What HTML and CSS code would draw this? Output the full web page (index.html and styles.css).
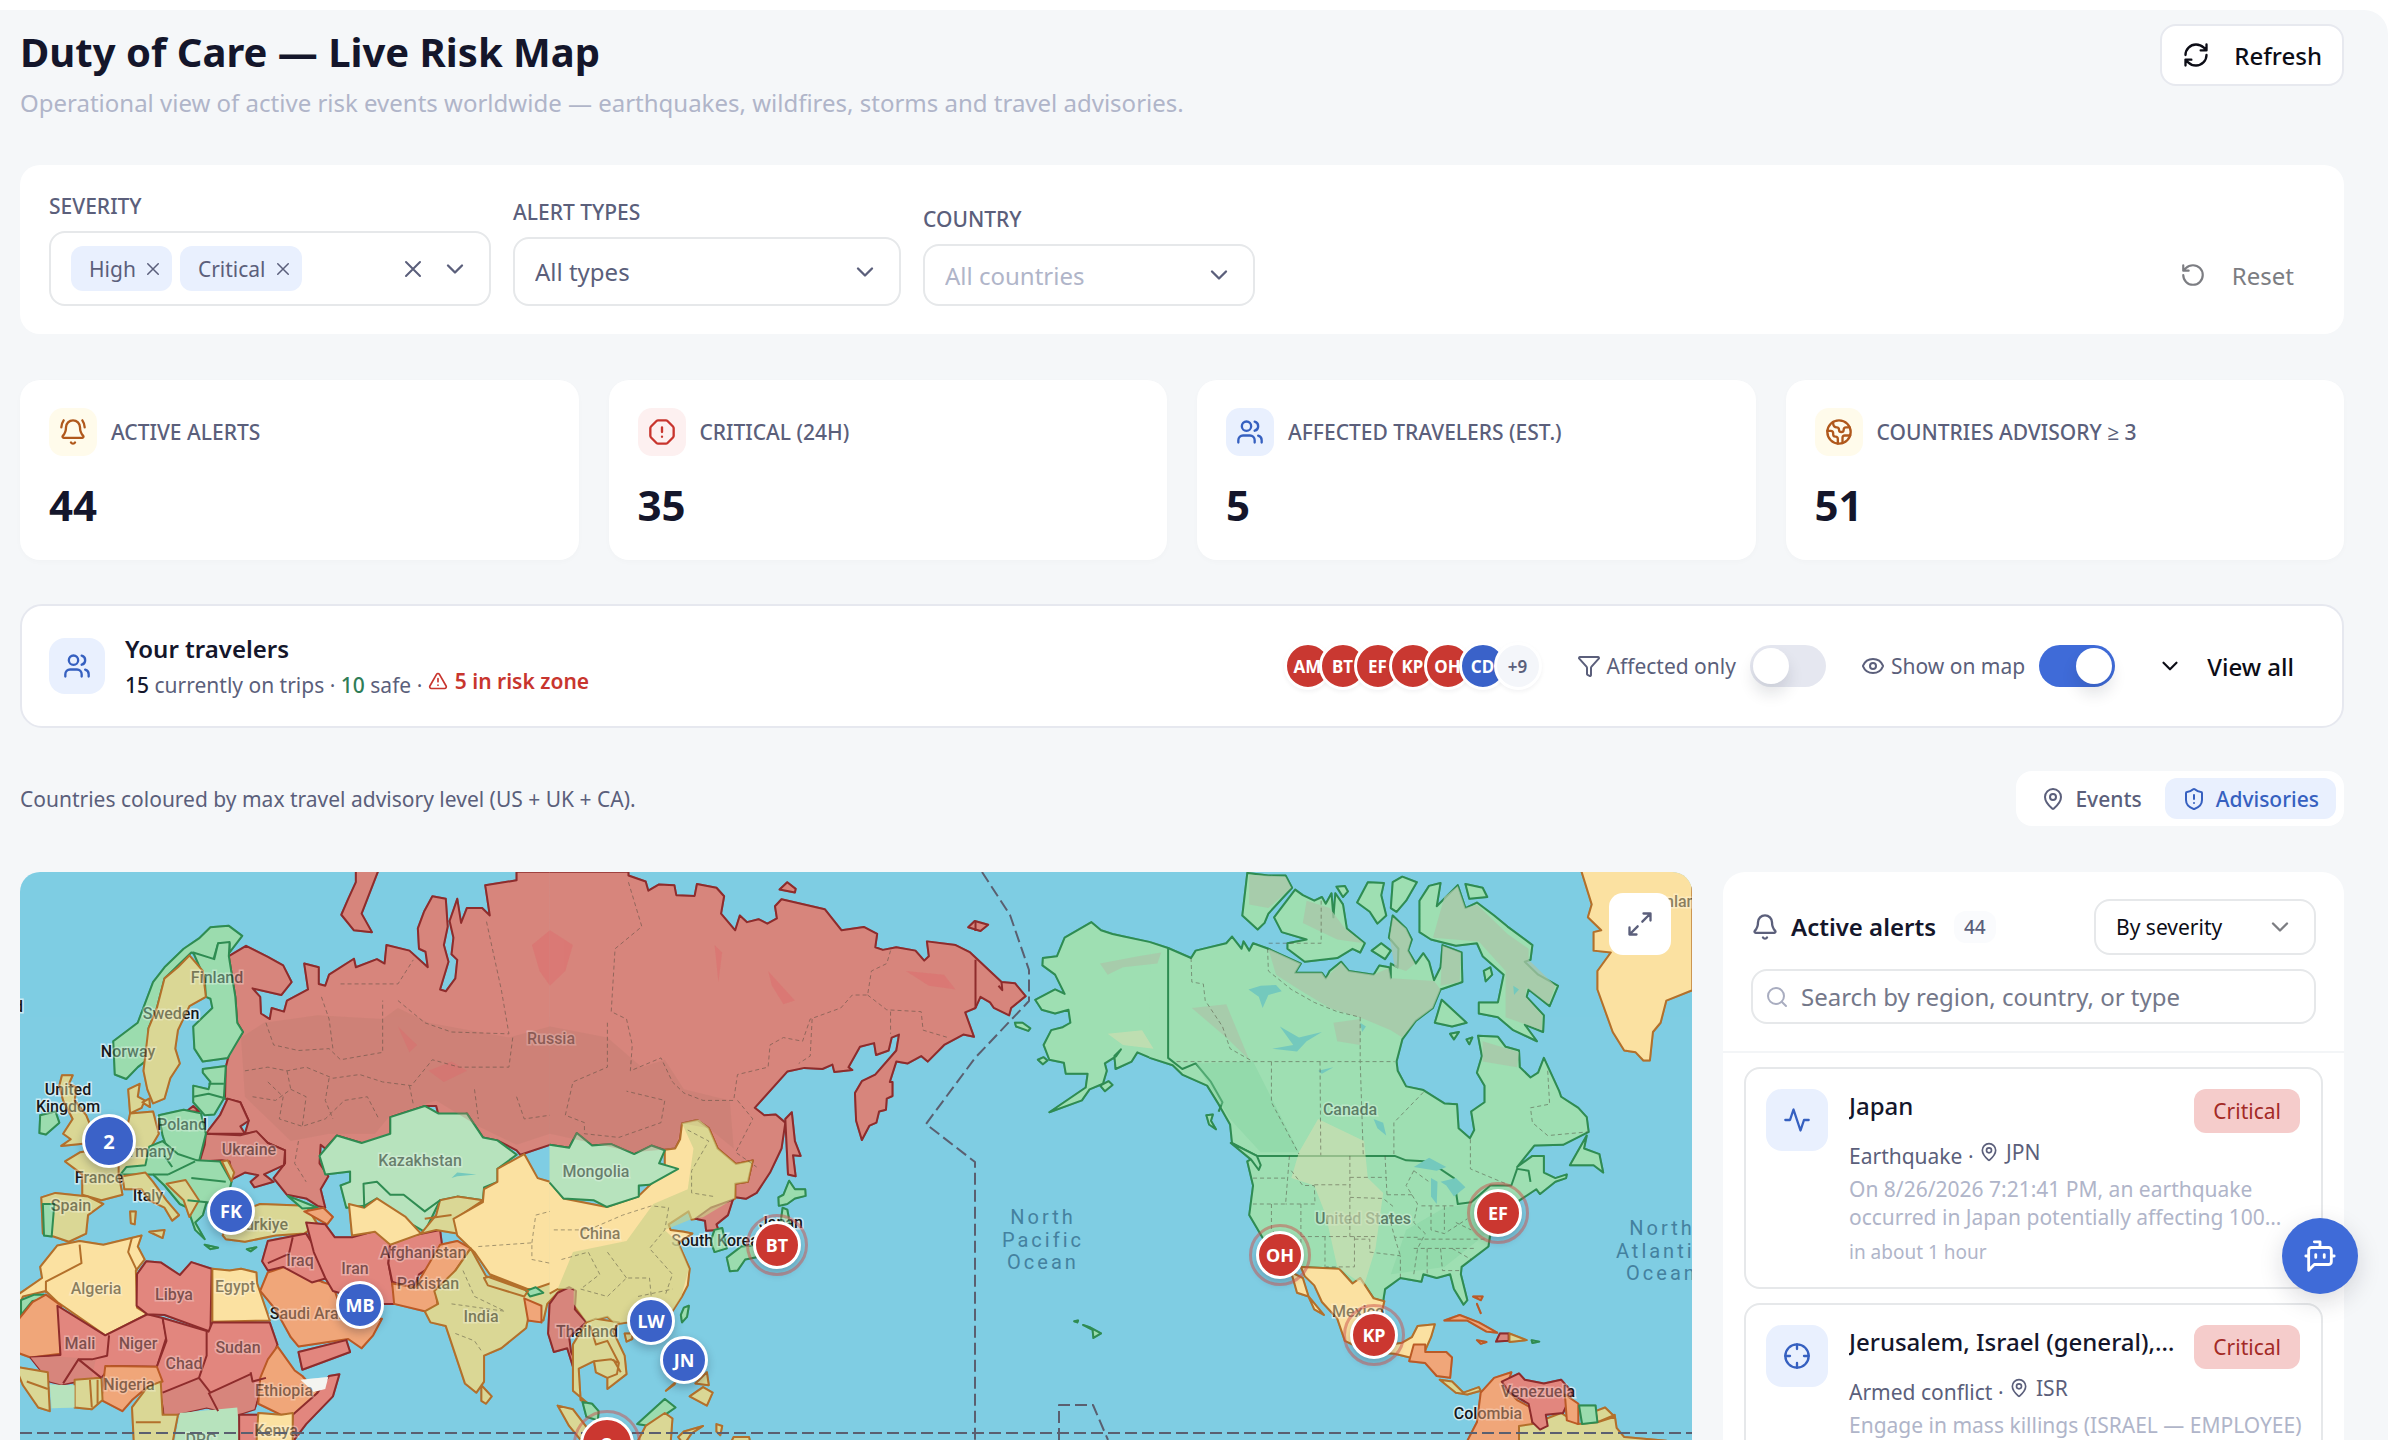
FILE: index.html
```html
<!DOCTYPE html>
<html lang="en">
<head>
<meta charset="utf-8">
<meta name="viewport" content="width=device-width, initial-scale=1">
<title>Duty of Care — Live Risk Map</title>
<link rel="stylesheet" href="styles.css">
</head>
<body>
<svg class="sprite" aria-hidden="true">
  <symbol id="i-chevron" viewBox="0 0 24 24"><path d="m6 9 6 6 6-6"/></symbol>
  <symbol id="i-x" viewBox="0 0 24 24"><path d="M19 5 5 19M5 5l14 14"/></symbol>
  <symbol id="i-refresh" viewBox="0 0 24 24"><path d="M3 12a9 9 0 0 1 9-9 9.75 9.75 0 0 1 6.74 2.74L21 8M21 3v5h-5M21 12a9 9 0 0 1-9 9 9.75 9.75 0 0 1-6.74-2.74L3 16M8 16H3v5"/></symbol>
  <symbol id="i-reset" viewBox="0 0 24 24"><path d="M3 12a9 9 0 1 0 9-9 9.75 9.75 0 0 0-6.74 2.74L3 8M3 3v5h5"/></symbol>
  <symbol id="i-bell" viewBox="0 0 24 24"><path d="M10.27 21a2 2 0 0 0 3.46 0M3.26 15.33A1 1 0 0 0 4 17h16a1 1 0 0 0 .74-1.67C19.41 13.96 18 12.5 18 8A6 6 0 0 0 6 8c0 4.5-1.41 5.96-2.74 7.33"/></symbol>
  <symbol id="i-bell-ring" viewBox="0 0 24 24"><path d="M10.27 21a2 2 0 0 0 3.46 0M22 8c0-2.3-.8-4.3-2-6M3.26 15.33A1 1 0 0 0 4 17h16a1 1 0 0 0 .74-1.67C19.41 13.96 18 12.5 18 8A6 6 0 0 0 6 8c0 4.5-1.41 5.96-2.74 7.33M4 2C2.800 3.700 2 5.700 2 8"/></symbol>
  <symbol id="i-octagon" viewBox="0 0 24 24"><path d="M12 16h.01M12 8v4M15.31 2a2 2 0 0 1 1.42.59l4.68 4.68A2 2 0 0 1 22 8.690v6.620a2 2 0 0 1-.59 1.420l-4.680 4.680a2 2 0 0 1-1.420.590H8.690a2 2 0 0 1-1.420-.590l-4.680-4.680A2 2 0 0 1 2 15.310V8.690a2 2 0 0 1 .590-1.420l4.680-4.680A2 2 0 0 1 8.690 2z"/></symbol>
  <symbol id="i-users" viewBox="0 0 24 24"><path d="M16 21v-2a4 4 0 0 0-4-4H6a4 4 0 0 0-4 4v2M22 21v-2a4 4 0 0 0-3-3.870M16 3.130a4 4 0 0 1 0 7.750"/><circle cx="9" cy="7" r="4"/></symbol>
  <symbol id="i-earth" viewBox="0 0 24 24"><path d="M21.540 15H17a2 2 0 0 0-2 2v4.540M7 3.340V5a3 3 0 0 0 3 3 2 2 0 0 1 2 2c0 1.100.900 2 2 2a2 2 0 0 0 2-2c0-1.100.900-2 2-2h3.170M11 21.950V18a2 2 0 0 0-2-2 2 2 0 0 1-2-2v-1a2 2 0 0 0-2-2H2.050"/><circle cx="12" cy="12" r="10"/></symbol>
  <symbol id="i-warn" viewBox="0 0 24 24"><path d="m21.730 18-8-14a2 2 0 0 0-3.480 0l-8 14A2 2 0 0 0 4 21h16a2 2 0 0 0 1.730-3M12 9v4M12 17h.01"/></symbol>
  <symbol id="i-filter" viewBox="0 0 24 24"><path d="M10 20a1 1 0 0 0 .550.900l2 1A1 1 0 0 0 14 21v-7a2 2 0 0 1 .520-1.340L21.740 4.670A1 1 0 0 0 21 3H3a1 1 0 0 0-.740 1.670l7.220 7.990A2 2 0 0 1 10 14z"/></symbol>
  <symbol id="i-eye" viewBox="0 0 24 24"><path d="M2.060 12.350a1 1 0 0 1 0-.700 10.750 10.750 0 0 1 19.880 0 1 1 0 0 1 0 .700 10.750 10.750 0 0 1-19.880 0"/><circle cx="12" cy="12" r="3"/></symbol>
  <symbol id="i-pin" viewBox="0 0 24 24"><path d="M20 10c0 4.990-5.540 10.190-7.400 11.800a1 1 0 0 1-1.200 0C9.540 20.190 4 14.990 4 10a8 8 0 0 1 16 0"/><circle cx="12" cy="10" r="3"/></symbol>
  <symbol id="i-shield" viewBox="0 0 24 24"><path d="M20 13c0 5-3.500 7.500-7.660 8.950a1 1 0 0 1-.670-.010C7.500 20.500 4 18 4 13V6a1 1 0 0 1 1-1c2 0 4.500-1.200 6.240-2.720a1.170 1.170 0 0 1 1.520 0C14.510 3.810 17 5 19 5a1 1 0 0 1 1 1zM12 8v4M12 16h.01"/></symbol>
  <symbol id="i-search" viewBox="0 0 24 24"><circle cx="11" cy="11" r="8"/><path d="m21 21-4.300-4.300"/></symbol>
  <symbol id="i-activity" viewBox="0 0 24 24"><path d="M22 12h-4l-3 9L9 3l-3 9H2"/></symbol>
  <symbol id="i-cross" viewBox="0 0 24 24"><circle cx="12" cy="12" r="10"/><path d="M22 12h-4M6 12H2M12 6V2M12 22v-4"/></symbol>
  <symbol id="i-expand" viewBox="0 0 24 24"><path d="M15 3h6v6M21 3l-7 7M3 21l7-7M9 21H3v-6"/></symbol>
  <symbol id="i-bot" viewBox="0 0 24 24"><path d="M12 6V2H8M8 18l-4 4V8a2 2 0 0 1 2-2h12a2 2 0 0 1 2 2v8a2 2 0 0 1-2 2ZM2 12h2M9 11v2M15 11v2M20 12h2"/></symbol>
</svg>

<main class="page">
  <header class="head">
    <div>
      <h1 class="title">Duty of Care — Live Risk Map</h1>
      <p class="subtitle">Operational view of active risk events worldwide — earthquakes, wildfires, storms and travel advisories.</p>
    </div>
    <button class="btn-refresh" type="button"><svg class="icon i28"><use href="#i-refresh"/></svg>Refresh</button>
  </header>

  <section class="filters" aria-label="Filters">
    <div class="field field-sev">
      <span class="field-label" id="sev-label">SEVERITY</span>
      <div class="multi" role="group" aria-labelledby="sev-label">
        <span class="chip">High<button type="button" aria-label="Remove High"><svg class="icon i18"><use href="#i-x"/></svg></button></span>
        <span class="chip">Critical<button type="button" aria-label="Remove Critical"><svg class="icon i18"><use href="#i-x"/></svg></button></span>
        <button class="multi-clear" type="button" aria-label="Clear"><svg class="icon i24"><use href="#i-x"/></svg></button>
        <button type="button" aria-label="Open"><svg class="icon i28"><use href="#i-chevron"/></svg></button>
      </div>
    </div>
    <div class="field field-types">
      <label class="field-label" for="types">ALERT TYPES</label>
      <div class="select-wrap tall"><select id="types"><option>All types</option></select><svg class="icon i28"><use href="#i-chevron"/></svg></div>
    </div>
    <div class="field field-country">
      <label class="field-label" for="country">COUNTRY</label>
      <div class="select-wrap muted"><select id="country"><option>All countries</option></select><svg class="icon i28"><use href="#i-chevron"/></svg></div>
    </div>
    <button class="btn-reset" type="button"><svg class="icon i26"><use href="#i-reset"/></svg>Reset</button>
  </section>

  <section class="stats" aria-label="Key figures">
    <article class="stat"><div class="stat-head"><span class="tile amber"><svg class="icon i28"><use href="#i-bell-ring"/></svg></span><h2>ACTIVE ALERTS</h2></div><p>44</p></article>
    <article class="stat"><div class="stat-head"><span class="tile rose"><svg class="icon i28"><use href="#i-octagon"/></svg></span><h2>CRITICAL (24H)</h2></div><p>35</p></article>
    <article class="stat"><div class="stat-head"><span class="tile blue"><svg class="icon i28"><use href="#i-users"/></svg></span><h2>AFFECTED TRAVELERS (EST.)</h2></div><p>5</p></article>
    <article class="stat"><div class="stat-head"><span class="tile amber"><svg class="icon i28"><use href="#i-earth"/></svg></span><h2>COUNTRIES ADVISORY ≥ 3</h2></div><p>51</p></article>
  </section>

  <section class="travelers" aria-label="Your travelers">
    <span class="tile blue big"><svg class="icon i28"><use href="#i-users"/></svg></span>
    <div class="trav-text">
      <h2>Your travelers</h2>
      <p><b class="dark">15</b> currently on trips · <b class="green">10</b> safe · <span class="risk"><svg class="icon i20"><use href="#i-warn"/></svg>5 in risk zone</span></p>
    </div>
    <ul class="avatars">
      <li>AM</li><li>BT</li><li>EF</li><li>KP</li><li>OH</li><li class="safe">CD</li><li class="more">+9</li>
    </ul>
    <label class="switch"><svg class="icon i24"><use href="#i-filter"/></svg><span>Affected only</span><input type="checkbox"></label>
    <label class="switch"><svg class="icon i24"><use href="#i-eye"/></svg><span>Show on map</span><input type="checkbox" checked></label>
    <button class="btn-view" type="button"><svg class="icon i26"><use href="#i-chevron"/></svg>View all</button>
  </section>

  <div class="toolbar">
    <p>Countries coloured by max travel advisory level (US + UK + CA).</p>
    <div class="segmented">
      <button type="button"><svg class="icon i24"><use href="#i-pin"/></svg>Events</button>
      <button class="on" type="button"><svg class="icon i24"><use href="#i-shield"/></svg>Advisories</button>
    </div>
  </div>

  <div class="content">
    <section class="map" aria-label="Risk map">
      <svg class="map-art" width="1672" height="568" viewBox="20 872 1672 568">
        <g id="land">
          <!-- Europe, Africa, West and South Asia -->
          <g transform="translate(0 860) scale(.38265 .3699)">
            <path class="r" d="M1437 32H1350L1350 55 1268 68 1280 150 1260 130 1220 130 1205 170 1195 105 1175 165 1185 210 1180 255 1195 270 1190 320 1165 355 1150 350 1172 275 1160 230 1170 180 1165 105 1130 98 1108 140 1092 185 1095 240 1112 248 1118 290 1070 245 1010 230 1005 280 985 268 930 290 925 267 860 310 850 340 833 335 833 290 795 280 805 350 750 380 742 410 710 400 705 430 682 415 680 370 660 347 735 365 762 330 740 285 700 262 643 232 598 260 615 370 620 440 635 465 600 520 590 560 588 645 628 655 650 705 640 740 670 735 700 765 745 785 745 820 715 860 750 905 800 915 830 935 850 940 838 890 858 855 835 820 838 770 850 780 880 745 945 765 1000 765 1020 740 1020 695 1110 665 1140 665 1145 685 1185 697 1220 685 1262 750 1300 758 1350 785 1360 797 1437 770"/>
            <path class="r" d="M930 0 990 25 945 145 972 195 925 190 892 148 910 105 930 60Z"/>
            <path class="r" d="M538 740 575 690 595 645 628 655 650 705 628 720 640 740Z"/>
            <path class="r" d="M538 740 628 744 670 733 700 765 745 785 742 825 690 850 715 870 665 885 655 870 675 852 640 845 608 862 600 815 580 812 522 815 535 770Z"/>
            <path class="r" d="M487 680 505 665 520 680Z"/>
            <path class="g" d="M300 580 296 490 360 440 400 330 430 290 480 240 520 212 550 182 598 178 633 205 600 250 600 225 570 225 558 268 540 272 500 250 460 290 430 320 410 400 388 455 385 540 360 560 330 592Z"/>
            <path class="g" d="M505 250 560 268 570 225 600 222 598 260 615 370 620 440 635 465 595 535 530 545 508 510 505 450 555 400 550 375 538 370 535 320Z"/>
            <path class="y" d="M375 570 388 455 410 400 430 320 465 290 495 258 530 300 538 370 495 395 465 460 458 510 470 550 445 590 430 645 400 658 385 620Z"/>
            <path class="g" d="M530 565 590 557 585 645 560 688 535 690 505 655 505 610 545 620 550 600 530 575Z"/>
            <path class="y" d="M335 620 365 605 360 640 378 650 370 670 340 685ZM372 655 390 645 392 668Z"/>
            <path class="y" d="M340 685 400 680 415 740 395 775 400 810 370 835 310 850 320 905 265 920 215 905 215 850 170 815 210 790 270 780 300 740 330 735Z"/>
            <path class="y" d="M162 582 190 582 180 605 200 615 195 650 225 690 245 740 235 765 160 773 185 755 165 740 190 700 165 650 155 610Z"/>
            <path class="g" d="M105 690 145 680 155 710 120 742 103 738Z"/>
            <path class="g" d="M415 690 480 675 525 685 538 740 520 815 440 790 425 745Z"/>
            <path class="g" d="M390 775 425 760 465 795 515 812 575 815 605 870 590 930 540 925 530 960 510 980 535 1025 510 1000 490 940 470 930 430 880 400 850 315 850 330 830 380 825Z"/>
            <path class="y" d="M320 855 380 845 400 870 435 920 468 960 450 975 430 940 390 920 370 890 325 890ZM390 1005 430 1000 425 1022ZM340 950 355 950 352 985 342 982ZM435 875 485 865 520 920 495 965 480 920Z"/>
            <path class="y" d="M580 815 595 812 612 845 605 868Z"/>
            <path class="y" d="M108 912 145 900 230 910 270 930 230 960 225 1010 180 1032 140 1018 112 1010Z"/>
            <path class="g" d="M112 930 142 930 135 1018 115 1015Z"/>
            <path class="y" d="M582 1015 600 960 680 930 800 935 830 985 795 1010 720 1015 640 1032 590 1025Z"/>
            <path class="g" d="M535 1040 570 1048 550 1052ZM645 1052 670 1047 655 1058ZM752 908 830 940 790 942Z"/>
            <path class="o" d="M795 950 845 940 870 965 855 985 830 970Z"/>
            <path class="y2" d="M150 1042 208 1030 270 1040 370 1015 360 1045 378 1080 355 1110 358 1210 385 1228 275 1285 150 1195 120 1165 60 1180 40 1225 40 1180 110 1130 105 1100Z"/>
            <path class="g" d="M55 1190 90 1175 115 1175 115 1188 85 1192 55 1230Z"/>
            <path class="o" d="M120 1175 160 1205 158 1335 80 1345 40 1330 50 1240 85 1195Z"/>
            <path class="r2" d="M150 1205 275 1285 385 1228 425 1238 435 1290 410 1370 290 1368 265 1400 160 1418 130 1410 80 1345 158 1338Z"/>
            <path class="r2" d="M358 1120 382 1085 420 1088 470 1122 500 1087 553 1105 550 1275 430 1230 385 1228 357 1205Z"/>
            <path class="y2" d="M555 1105 600 1110 630 1105 670 1115 672 1145 705 1245 555 1248Z"/>
            <path class="r2" d="M425 1238 545 1275 555 1250 705 1250 725 1310 695 1400 680 1440 665 1485 620 1500 540 1480 430 1505 420 1450 410 1370 435 1300Z"/>
            <path class="r nb" d="M425 1440 520 1400 550 1440 655 1390 675 1440 665 1485 620 1500 540 1480 430 1505ZM80 1345 150 1342 250 1350 240 1400 160 1418 130 1410Z"/>
            <path class="o" d="M275 1368 410 1370 425 1410 385 1425 345 1460 320 1490 265 1460Z"/>
            <path class="y" d="M40 1370 125 1385 130 1490 100 1480 60 1420ZM195 1405 265 1400 268 1460 240 1485 195 1480ZM385 1425 420 1410 425 1500 465 1500 450 1580 350 1580 345 1480Z"/>
            <path class="g3 nb" d="M130 1418 195 1420 195 1480 135 1482ZM470 1495 620 1480 628 1580 455 1580Z"/>
            <path class="o" d="M700 1350 725 1315 770 1380 790 1395 830 1440 770 1500 735 1500 675 1470 680 1400Z"/>
            <path class="r2" d="M860 1395 887 1390 870 1450 800 1525 760 1580 765 1500 830 1440ZM625 1500 675 1500 675 1580 625 1580Z"/>
            <path class="w nb" d="M785 1405 858 1398 850 1430 820 1438Z"/>
            <path class="y2" d="M675 1495 735 1500 765 1495 765 1580 670 1580Z"/>
            <path class="o" d="M680 1165 700 1115 745 1100 840 1140 870 1150 900 1240 998 1240 975 1285 945 1320 910 1295 780 1315 760 1290 720 1215Z"/>
            <path class="r2" d="M780 1330 905 1298 915 1330 790 1378Z"/>
            <path class="r2" d="M700 1030 760 1018 800 1010 830 1060 855 1130 815 1142 740 1100 700 1110 685 1085Z"/>
            <path class="r2" d="M800 980 850 985 875 1020 920 1020 985 1002 1020 1030 1015 1090 1035 1200 985 1200 870 1165 850 1130 820 1060Z"/>
            <path class="r2" d="M1020 1040 1065 1018 1150 1000 1155 1040 1140 1090 1095 1120 1080 1160 1025 1140 1015 1090Z"/>
            <path class="o" d="M1025 1145 1085 1155 1150 1040 1195 1030 1230 1050 1190 1110 1140 1175 1145 1215 1110 1220 1030 1200Z"/>
            <path class="g3" d="M835 800 880 745 945 765 1020 740 1020 695 1110 665 1145 685 1220 685 1262 750 1300 758 1350 797 1300 835 1300 870 1265 885 1262 920 1195 910 1150 920 1110 1005 1060 975 985 915 952 935 905 940 890 880 915 870 915 842 850 850Z"/>
            <path class="y2" d="M912 930 952 940 985 915 1060 965 1100 1010 1020 1040 980 1005 920 1015Z"/>
            <path class="y" d="M1100 1010 1140 960 1150 920 1195 910 1262 920 1190 970 1195 1010 1140 1000Z"/>
            <path class="y2" d="M1437 870 1405 860 1370 795 1300 835 1300 870 1265 890 1262 925 1185 970 1195 1015 1240 1060 1280 1120 1380 1160 1437 1165"/>
            <path class="y" d="M1110 1220 1145 1200 1135 1165 1190 1110 1230 1050 1270 1125 1380 1165 1450 1140 1475 1150 1430 1200 1420 1245 1380 1240 1375 1265 1310 1320 1265 1340 1265 1410 1245 1440 1215 1415 1165 1260 1125 1250ZM1258 1420 1285 1450 1270 1470 1258 1462Z"/>
            <path class="g" d="M1375 1165 1400 1155 1420 1170 1385 1180Z"/>
            <path class="o" d="M1370 1185 1415 1205 1415 1250 1380 1245Z"/>
            <path class="bg" d="M505 640 545 632 590 645M545 605 585 605M440 850 510 815M500 860 590 870M430 800 450 830M400 850 440 850M952 940 950 875 985 870 1020 905 1055 905 1110 950 1150 920M490 920 540 925"/>
            <path class="by" d="M310 850 310 780M208 1040 213 1090 120 1140 120 1170M345 1020 335 1060 358 1110M1265 1130 1285 1125 1380 1165 1370 1180 1275 1150ZM235 1405 240 1480M255 1405 255 1470M70 1410 125 1430M355 1520 420 1520M1110 970 1180 960"/>
            <path class="br" d="M165 1415 205 1350 265 1400M285 1285 280 1340 240 1350 205 1350M540 1275 540 1340 520 1400 550 1440 655 1390M425 1440 520 1400M545 1440 570 1490M765 1020 755 1065 700 1090M655 1385 660 1410 695 1400"/>
          </g>
          <!-- East Asia, Siberia, Alaska -->
          <g transform="translate(550 860) scale(.38265 .3699)">
            <path class="r" d="M-1 32 205 32 205 42 250 58 257 83 285 66 325 68 330 95 378 97 384 65 435 75 455 98 447 145 484 190 496 150 515 168 545 160 568 172 593 158 588 125 605 106 718 133 762 190 820 181 855 200 850 236 870 243 905 236 955 245 978 272 990 260 985 220 1060 230 1098 250 1180 330 1215 333 1243 368 1205 400 1200 420 1160 400 1150 385 1125 370 1112 400 1085 412 1108 478 1080 472 1030 500 987 545 970 530 935 550 905 545 888 600 895 600 895 638 880 645 878 675 860 680 853 710 835 718 815 757 800 705 797 630 815 598 850 580 905 515 912 472 893 480 885 515 852 527 847 495 810 505 780 560 790 568 743 573 738 553 712 565 665 562 620 572 535 670 560 690 590 688 615 710 605 780 575 845 540 900 512 916 484 912 484 875 517 870 530 812 486 822 438 780 415 725 385 703 345 712 340 755 327 780 298 783 265 772 220 795 160 768 110 772 70 738 50 778 -1 770"/>
            <path class="r" d="M600 80 620 60 642 78 640 88ZM1093 182 1110 165 1145 175 1125 192ZM615 700 632 682 640 760 655 800 635 798 642 855 622 850Z"/>
            <path class="br" d="M1112 270 1112 400M1180 330 1182 352 1172 340M1112 165V192"/>
            <path class="y2" d="M-1 870 35 915 148 938 230 910 300 840 300 783 327 780 340 755 345 712 385 703 415 725 438 780 486 822 530 812 517 870 484 875 484 915 400 968 370 972 362 950 310 985 315 1000 350 1005 372 1010 335 1035 365 1105 360 1150 345 1180 320 1220 240 1245 170 1255 150 1235 95 1250 60 1200 60 1160 20 1160 -1 1172"/>
            <path class="g3" d="M-1 770 50 778 70 738 110 772 160 768 220 795 265 772 300 785 285 820 335 835 260 878 232 880 232 910 148 938 115 920 35 915 -1 872"/>
            <path class="r" d="M380 970 420 940 478 918 465 960 435 985 440 1000 408 1002 405 975Z"/>
            <path class="g" d="M430 1000 450 995 462 1050 430 1060 420 1030ZM625 867 640 890 667 890 668 908 640 915 620 930 598 935 597 912 610 905ZM608 940 620 945 630 1000 560 1070 510 1080 490 1110 470 1112 462 1075 500 1045 560 1040 600 1000ZM350 1210 363 1205 358 1235 345 1250 342 1230Z"/>
            <path class="r" d="M-1 1200 20 1170 50 1155 68 1165 65 1215 95 1250 50 1290 55 1330 70 1360 70 1420 60 1370 45 1320 10 1330 -5 1280Z"/>
            <path class="y" d="M60 1310 95 1250 120 1240 180 1250 165 1275 195 1340 200 1390 150 1430 150 1400 120 1385 115 1355 75 1375 80 1460 100 1470 60 1435ZM195 1280 215 1280 215 1295 200 1302Z"/>
            <path class="by" d="M115 1355 160 1350 180 1360 150 1300 120 1310 105 1260M165 1350 185 1385M180 1360 175 1390 150 1400"/>
            <path class="g" d="M85 1465 110 1470 127 1490 125 1515 95 1505ZM228 1525 300 1457 328 1480 300 1500 260 1530Z"/>
            <path class="y" d="M20 1475 60 1485 130 1580 90 1580 50 1530ZM250 1530 300 1495 320 1510 315 1580 225 1580ZM350 1545 400 1530 370 1550 350 1580 335 1560ZM435 1525 450 1530 445 1555 435 1545ZM480 1560 520 1560 525 1580 470 1580ZM365 1450 400 1425 425 1440 410 1475ZM380 1415 410 1385 415 1420ZM303 1435 328 1412 325 1418Z"/>
            <path class="g2" d="M1569 222 1500 207 1470 200 1440 190 1415 168 1345 210 1325 260 1288 265 1287 285 1320 310 1345 362 1320 350 1268 378 1285 405 1320 415 1355 405 1360 440 1340 452 1310 460 1290 500 1305 540 1343 548 1348 578 1405 578 1400 615 1305 682 1390 650 1410 620 1445 605 1455 570 1450 550 1480 530 1492 512 1475 530 1478 565 1520 545 1535 520 1569 535"/>
            <path class="g2" d="M1275 540 1290 533 1300 542 1288 552ZM1438 610 1460 598 1470 608 1450 625ZM1215 440 1235 440 1255 455 1250 462 1218 450Z"/>
            <path class="g" d="M1370 1247 1380 1245 1378 1250ZM1393 1257 1410 1263 1440 1280 1420 1292 1418 1270Z"/>
          </g>
          <!-- The Americas -->
          <g transform="translate(1100 860) scale(.38265 .3699)">
            <path class="g2" d="M131 222 178 238 238 265 250 245 330 225 345 207 370 240 375 220 390 245 400 225 440 240 525 280 510 305 580 305 590 320 600 300 630 275 650 300 715 310 730 285 755 290 760 320 760 280 778 290 780 240 755 210 765 150 800 185 815 215 805 245 825 280 845 252 860 275 873 325 890 290 895 230 945 250 947 330 890 350 870 400 825 435 790 485 775 545 778 570 800 612 845 622 900 658 933 660 937 725 967 752 978 730 970 680 1005 655 1005 610 985 575 998 530 988 475 1040 478 1060 505 1095 515 1097 560 1125 588 1145 575 1160 535 1200 625 1205 640 1250 670 1272 695 1277 735 1210 770 1135 772 1090 830 1130 800 1160 800 1160 845 1190 860 1220 850 1218 860 1190 870 1150 903 1140 890 1060 945 1020 1010 1015 1045 945 1100 943 1120 960 1190 950 1202 925 1160 915 1120 880 1130 845 1120 840 1140 785 1130 745 1160 740 1193 715 1185 680 1130 660 1145 625 1105 525 1100 460 1050 430 1030 390 960 400 880 385 815 410 800 345 765 340 715 310 660 280 610 215 580 190 555 130 535"/>
            <path class="g2" d="M385 35 440 42 485 42 502 75 440 145 430 170 412 188 372 150ZM455 155 510 80 530 95 560 110 580 100 590 118 605 90 610 155 615 90 635 120 645 185 692 225 680 250 660 240 620 265 535 275 490 240 490 225 540 215 475 195ZM618 72 640 70 648 85 635 100ZM672 115 700 60 742 62 735 95 748 150 725 172 705 140ZM765 60 790 45 828 60 800 110 775 140 760 130ZM710 245 735 225 760 245 745 268ZM835 195 835 110 860 70 890 62 880 125 935 68 955 130 985 115 1030 150 1065 180 1130 230 1125 270 1110 275 1145 310 1197 340 1175 395 1120 350 1115 370 1160 420 1158 465 1110 445 1142 490 1080 460 1040 425 990 415 990 385 1040 385 1055 310 1000 260 985 225 930 232 865 215ZM955 65 1000 75 1012 100 965 105ZM1003 300 1020 290 1025 310 1008 328ZM893 378 958 440 920 450 875 440ZM915 470 938 465 925 485ZM958 485 973 480 965 498ZM1228 825 1272 745 1265 780 1305 795 1315 845 1290 825ZM278 690 295 688 290 705 303 728 285 715ZM342 765 410 800 420 825 415 838 395 810Z"/>
            <path class="bg" d="M178 238V535L215 565 250 550 290 600 320 655 310 680M410 800H770L800 812 860 815 925 860 935 930 970 925 1020 880 1075 880 1090 835 1120 840 1125 870"/>
            <path class="y2" d="M1258 30H1548V352L1480 380 1465 440 1445 465 1437 542 1420 542 1400 520 1370 515 1340 465 1300 350 1300 300 1335 250 1290 245 1290 195 1310 190 1275 155 1285 120Z"/>
            <path class="y2" d="M525 1100 625 1105 660 1145 680 1130 715 1185 743 1193 730 1250 760 1310 790 1305 815 1290 830 1260 875 1255 865 1290 850 1325 810 1345 770 1335 700 1330 640 1300 620 1240 580 1195 560 1150 535 1125ZM500 1115 530 1130 545 1180 585 1230 560 1215 545 1180 515 1170Z"/>
            <path class="o" d="M820 1310 850 1310 850 1330 905 1330 920 1345 915 1400 880 1395 850 1360 808 1355ZM900 1245 940 1230 990 1250 1038 1278 1010 1275 960 1245ZM985 1298 1010 1303 995 1308ZM975 1180 1000 1180 995 1190ZM985 1200 995 1225Z"/>
            <path class="r" d="M1045 1280 1068 1280 1068 1300 1035 1302Z"/>
            <path class="y" d="M1070 1280 1115 1298 1070 1303ZM888 1405 920 1410 950 1440 990 1425 995 1435 960 1445 930 1440Z"/>
            <path class="g" d="M1128 1298 1148 1302 1130 1306Z"/>
            <path class="o" d="M995 1440 1030 1400 1075 1385 1060 1430 1090 1460 1125 1480 1130 1525 1095 1580 955 1580 985 1520Z"/>
            <path class="y" d="M1095 1530 1130 1525 1205 1495 1250 1525 1300 1520 1345 1500 1350 1535 1370 1560 1480 1570 1490 1590 1095 1590ZM1295 1490 1320 1480 1345 1505 1300 1520Z"/>
            <path class="r2" d="M1050 1410 1095 1388 1110 1405 1160 1415 1205 1405 1235 1440 1210 1495 1165 1500 1170 1530 1150 1540 1130 1520 1120 1470 1070 1440Z"/>
            <path class="o" d="M1215 1445 1250 1470 1250 1525 1220 1515Z"/>
            <path class="g" d="M1252 1475 1295 1475 1300 1520 1260 1525Z"/>
          </g>
        </g>

        <g class="labels">
          <text x="23" y="1012" text-anchor="end">Iceland</text>
          <text x="217" y="983">Finland</text><text x="171" y="1019">Sweden</text><text x="128" y="1057">Norway</text>
          <text x="68" y="1095">United</text><text x="68" y="1112">Kingdom</text>
          <text x="182" y="1130">Poland</text><text x="142" y="1157">Germany</text><text x="99" y="1183">France</text>
          <text x="148" y="1201">Italy</text><text x="71" y="1211">Spain</text><text x="262" y="1230">Türkiye</text><text x="249" y="1155">Ukraine</text>
          <text x="551" y="1044">Russia</text><text x="420" y="1166">Kazakhstan</text><text x="596" y="1177">Mongolia</text><text x="600" y="1239">China</text>
          <text x="96" y="1294">Algeria</text><text x="174" y="1300">Libya</text><text x="235" y="1292">Egypt</text><text x="300" y="1266">Iraq</text><text x="355" y="1274">Iran</text>
          <text x="423" y="1258">Afghanistan</text><text x="428" y="1289">Pakistan</text><text x="315" y="1319">Saudi Arabia</text><text x="481" y="1322">India</text>
          <text x="80" y="1349">Mali</text><text x="138" y="1349">Niger</text><text x="184" y="1369">Chad</text><text x="238" y="1353">Sudan</text><text x="129" y="1390">Nigeria</text>
          <text x="284" y="1396">Ethiopia</text><text x="276" y="1436">Kenya</text><text x="201" y="1445">DRC</text>
          <text x="715" y="1246">South Korea</text><text x="781" y="1228">Japan</text><text x="587" y="1337">Thailand</text>
          <text x="1350" y="1115">Canada</text><text x="1363" y="1224">United States</text><text x="1358" y="1317">Mexico</text>
          <text x="1488" y="1419">Colombia</text><text x="1538" y="1397">Venezuela</text><text x="1668" y="907">Greenland</text>
        </g>
        <use class="tint" href="#land"/>

        <!-- Terrain, lakes and inner borders -->
        <g transform="translate(0 860) scale(.38265 .3699)">
          <path class="shade-r" d="M690 440 830 420 1000 430 1040 400 1120 440 1330 480 1437 450V740L1350 770 1250 720 1140 650 1020 690 980 740 860 740 760 760 640 640 630 480Z"/>
          <path class="glow-r" d="M1390 230 1437 190V340L1410 300ZM1120 570 1180 545 1220 570 1160 600ZM1040 450 1090 500 1070 520Z"/>
          <path class="inner" d="M695 440 715 500 780 515 860 510 890 540 1000 520 1000 380M840 370 860 430 870 510M890 335 1040 335 1080 270M1040 380 1110 440 1180 465 1330 470 1310 350 1270 160M640 570 700 560 750 570 800 560 870 590 940 580 1000 600 1075 610 1130 540 1200 560 1330 560 1340 480M700 600 740 640 730 700 790 720 850 700 900 650 960 640 990 700M860 590 850 650 870 700M780 760 770 820 800 870M1070 610 1080 660M1240 620 1250 700M1350 640 1370 700 1437 690M660 640 720 650 760 620 800 640 790 720M750 570 760 620M1250 1045 1390 1035 1390 1080 1437 1090M1390 1035 1400 960 1437 950M1180 1200 1250 1210 1320 1220M1190 1280 1240 1300 1260 1330M1210 1110 1240 1180 1320 1220"/>
          <path class="lake" d="M1180 860 1195 845 1245 850 1195 855Z"/>
        </g>
        <g transform="translate(550 860) scale(.38265 .3699)">
          <path class="shade-r" d="M0 450 150 480 240 560 300 540 350 620 470 650 480 780 415 725 345 712 327 780 220 790 0 740Z"/>
          <path class="glow-r" d="M0 190 60 230 40 300 0 340ZM570 300 640 380 610 390 580 340ZM430 230 450 250 440 330ZM930 300 1030 310 1060 350 990 340Z"/>
          <path class="olive" d="M390 702 415 725 438 780 486 822 528 814 517 870 484 875 482 915 400 966 372 970 300 1000 335 1035 363 1105 343 1180 320 1218 240 1243 170 1253 150 1235 95 1248 62 1200 62 1160 20 1160 60 1060 200 1030 270 930 360 890 375 780 345 712Z"/>
          <path class="inner" d="M205 60 240 180 170 240 160 410 200 430 215 500 210 570 290 535 320 600 350 630 400 650 480 650 490 580 570 560 575 500 610 480 660 490 680 430 760 400 790 365 830 365 840 300 880 280 890 245M830 365 880 405 970 410 975 460 1040 480M150 440 150 560 60 600 40 690 90 710 90 740 180 750 290 710 300 650 200 625M490 650 530 700 485 790 540 830M685 430 680 530 650 550M890 410 890 470"/>
          <path class="inner" d="M360 730 415 760 370 840 370 900 430 910M10 1000 100 1000 190 960 265 935 310 940 300 1000 260 1050 320 1120 300 1180M30 1080 100 1060 130 1120 80 1160 150 1180 200 1130 260 1130 270 1240M150 1060 200 1130M230 1180 320 1160"/>
        </g>
        <g transform="translate(1100 860) scale(.38265 .3699)">
          <path class="tundra" d="M440 240 525 280 510 305 580 305 590 320 630 277 650 300 715 310 755 292 760 320 873 327 890 350 870 400 825 435 790 480 760 460 690 430 600 400 520 350 460 310ZM757 210 765 155 800 185 813 215 805 245 823 280 800 300 770 290ZM895 232 943 250 940 330 890 340ZM900 100 935 70 955 130 985 120 1065 200 1120 240 1120 270 1190 340 1172 390 1115 345 1112 370 1155 420 1155 460 1060 425 1060 300 990 220 870 210ZM540 110 600 130 640 185 690 225 620 215 530 170ZM390 40 485 45 500 75 440 130 390 120ZM1000 490 1095 520 1090 560 1000 545ZM240 400 330 390 390 540 330 480ZM610 440 680 430 680 500 620 490ZM0 280 100 260 160 250 150 280 60 290 20 310Z"/>
          <path class="sand" d="M570 700 690 760 700 860 740 900 720 1050 690 1150 620 1100 590 960 560 880 500 860 520 790ZM20 470 110 460 140 510 60 500Z"/>
          <path class="forest" d="M250 550 400 545 520 790 420 790 340 700ZM900 940 980 930 1010 1010 900 1100 760 1120 800 1000Z"/>
          <path class="lake" d="M388 350 420 340 460 338 475 355 440 365 425 400 415 370ZM470 450 520 480 580 465 540 490 515 518 450 510 505 500ZM570 570 610 560 580 578ZM715 700 740 710 748 745 725 725ZM820 830 860 805 905 830 880 840ZM865 860 882 870 880 930 865 910ZM890 870 930 860 955 885 925 910 905 880ZM680 440 695 450 685 465ZM1080 340 1095 350 1082 365Z"/>
          <path class="inner" d="M200 545H770M448 545V655L520 795M575 545 577 798M680 425 680 545 688 798M438 240 440 300 500 350 560 385 620 410 680 425M238 265 240 330 270 335 275 380 320 450 340 510 400 545M578 110V225H440M845 628 768 710V795M968 755V835L1060 875M1170 570 1175 660 1125 670 1130 710 1170 745 1275 735M400 860H485M495 800 485 930H400M448 930V1000L520 1070M525 930V1100M500 840 530 880 560 880 562 930H485M560 878H655M653 800V1018M653 858H750M745 800 750 905M653 912 740 915 770 940M750 905H820M525 1018H720M588 1018V1100M665 1018V1100H590M665 1025H705V1060L785 1070V1130M755 960 770 1020H830M770 1020 785 1070M820 840 800 880 830 930 820 980 850 1010 830 1050 820 1120M820 840 860 870M840 935 925 935M865 935V1000L900 1010 960 970M900 935V1000M830 1025H1010M855 1050V1120M890 1050 895 1110H940M920 1050 970 1080M820 1050H980M930 980 970 1000"/>
        </g>

        <g class="ocean">
          <text x="1043" y="1224">North</text><text x="1043" y="1247">Pacific</text><text x="1043" y="1269">Ocean</text>
          <text x="1662" y="1235">North</text><text x="1662" y="1258">Atlantic</text><text x="1662" y="1280">Ocean</text>
        </g>
        <path class="line" d="M982 872 1010 915 1029 970V1001L975 1058 926 1124 975 1162V1440M20 1433H1692M1059 1440V1424H1059V1405H1093L1108 1440"/>
      </svg>
      <button class="pin lg" type="button" style="left:89px;top:269px">2</button>
      <button class="pin" type="button" style="left:211px;top:339px">FK</button>
      <button class="pin" type="button" style="left:340px;top:433px">MB</button>
      <button class="pin" type="button" style="left:631px;top:449px">LW</button>
      <button class="pin" type="button" style="left:664px;top:488px">JN</button>
      <button class="pin risk-pin" type="button" style="left:757px;top:373px">BT</button>
      <button class="pin risk-pin" type="button" style="left:1260px;top:383px">OH</button>
      <button class="pin risk-pin" type="button" style="left:1478px;top:341px">EF</button>
      <button class="pin risk-pin" type="button" style="left:1354px;top:463px">KP</button>
      <button class="pin risk-pin lg" type="button" style="left:587px;top:572px">2</button>
      <button class="expand" type="button" aria-label="Expand map"><svg class="icon i28"><use href="#i-expand"/></svg></button>
    </section>

    <aside class="alerts" aria-label="Active alerts">
      <div class="alerts-head">
        <div class="alerts-row">
          <svg class="icon i28"><use href="#i-bell"/></svg>
          <h2>Active alerts</h2>
          <span class="count">44</span>
          <div class="select-wrap small"><select aria-label="Sort alerts"><option>By severity</option></select><svg class="icon i28"><use href="#i-chevron"/></svg></div>
        </div>
        <label class="search"><svg class="icon i24"><use href="#i-search"/></svg><input type="search" placeholder="Search by region, country, or type" aria-label="Search alerts"></label>
      </div>
      <div class="alert-list">
        <article class="alert">
          <span class="tile blue xl"><svg class="icon i28"><use href="#i-activity"/></svg></span>
          <div class="alert-body">
            <div class="alert-top"><h3>Japan</h3><span class="tag">Critical</span></div>
            <p class="meta">Earthquake · <span><svg class="icon i20"><use href="#i-pin"/></svg>JPN</span></p>
            <p class="desc">On 8/26/2026 7:21:41 PM, an earthquake occurred in Japan potentially affecting 100 thousand people in the surrounding region.</p>
            <p class="time">in about 1 hour</p>
          </div>
        </article>
        <article class="alert">
          <span class="tile blue xl"><svg class="icon i28"><use href="#i-cross"/></svg></span>
          <div class="alert-body">
            <div class="alert-top"><h3>Jerusalem, Israel (general), West Bank</h3><span class="tag">Critical</span></div>
            <p class="meta">Armed conflict · <span><svg class="icon i20"><use href="#i-pin"/></svg>ISR</span></p>
            <p class="desc">Engage in mass killings (ISRAEL — EMPLOYEE)</p>
          </div>
        </article>
      </div>
    </aside>
  </div>
</main>
<button class="fab" type="button" aria-label="Open assistant"><svg class="icon i32"><use href="#i-bot"/></svg></button>
</body>
</html>
```
FILE: styles.css
```css
* { box-sizing: border-box; }
body, h1, h2, h3, p, ul { margin: 0; padding: 0; }
body {
  background: #fff;
  font-family: "Noto Sans", "Open Sans", sans-serif;
  font-size: 21px;
  color: #5b5f7b;
  overflow: hidden;
}
button, select, input { font: inherit; color: inherit; margin: 0; }
button { background: none; border: 0; padding: 0; display: inline-flex; align-items: center; justify-content: center; cursor: pointer; }
.sprite { display: none; }
.icon { fill: none; stroke: currentColor; stroke-width: 2; stroke-linecap: round; stroke-linejoin: round; flex: none; }
.i18 { width: 18px; height: 18px; }
.i20 { width: 20px; height: 20px; }
.i24 { width: 24px; height: 24px; }
.i26 { width: 26px; height: 26px; }
.i28 { width: 28px; height: 28px; }
.i32 { width: 34px; height: 34px; }

.page {
  display: flex;
  flex-direction: column;
  height: calc(100vh - 10px);
  margin: 10px 12px 0 0;
  padding: 14px 44px 0 20px;
  background: #f5f7f9;
  border-radius: 0 24px 0 0;
}

/* Header */
.head { display: flex; justify-content: space-between; align-items: flex-start; height: 141px; }
.title { font-size: 40px; font-weight: 700; line-height: 56px; color: #14162b; }
.subtitle { font-size: 24px; line-height: 36px; margin-top: 5px; color: #b0b5c9; }
.btn-refresh { height: 62px; padding: 0 20px; gap: 24px; background: #fff; border: 2px solid #e7e9ef; border-radius: 16px; font-size: 24px; font-weight: 500; color: #0c0d16; }

/* Filters */
.filters { display: flex; align-items: flex-end; gap: 22px; padding: 27px 29px 28px; background: #fff; border-radius: 20px; }
.field { display: flex; flex-direction: column; gap: 11px; }
.field-sev { width: 442px; }
.field-types { width: 388px; }
.field-country { width: 332px; }
.field-label { line-height: 28px; font-weight: 500; }
.multi { display: flex; align-items: center; gap: 8px; height: 75px; padding: 0 20px; border: 2px solid #e6e8ea; border-radius: 16px; }
.multi-clear { margin-left: auto; margin-right: 8px; }
.chip { display: inline-flex; align-items: center; gap: 8px; height: 45px; padding: 0 10px 0 18px; background: #e9f0fe; border-radius: 12px; }
.select-wrap { position: relative; }
.select-wrap select { appearance: none; width: 100%; height: 62px; padding: 0 20px; background: #fff; border: 2px solid #e6e8ea; border-radius: 16px; font-size: 24px; }
.select-wrap .icon { position: absolute; right: 22px; top: 50%; margin-top: -14px; pointer-events: none; }
.tall select { height: 69px; }
.muted select { color: #b0b5c9; }
.btn-reset { margin-left: auto; height: 62px; padding: 0 21px; gap: 26px; font-size: 24px; color: #7c7d82; }

/* Figures */
.stats { display: grid; grid-template-columns: repeat(4, 1fr); gap: 30px; margin-top: 46px; }
.stat { padding: 28px 29px 30px; background: #fff; border-radius: 20px; box-shadow: 0 2px 6px rgba(20, 22, 43, .02); }
.stat-head { display: flex; align-items: center; gap: 14px; }
.stat h2 { font-size: 21px; font-weight: 500; line-height: 28px; }
.stat p { margin-top: 24px; font-size: 42px; font-weight: 700; line-height: 50px; color: #14162b; }
.tile { display: flex; align-items: center; justify-content: center; width: 48px; height: 48px; border-radius: 14px; flex: none; }
.amber { background: #fffbeb; color: #b0581c; }
.rose { background: #fdf0f0; color: #c8352e; }
.blue { background: #e9f0fe; color: #3660c0; }
.big { width: 56px; height: 56px; border-radius: 16px; }
.xl { width: 62px; height: 62px; border-radius: 16px; }

/* Travelers */
.travelers { display: flex; align-items: center; height: 124px; margin-top: 44px; padding: 0 27px; background: #fff; border: 2px solid #e6e8ef; border-radius: 22px; }
.trav-text { margin-left: 20px; margin-right: auto; }
.trav-text h2 { font-size: 24px; font-weight: 600; line-height: 34px; color: #14162b; }
.trav-text p { display: flex; align-items: flex-end; line-height: 30px; white-space: pre; }
.trav-text b { font-weight: 500; }
.dark { color: #14162b; }
.green { color: #2f7d57; }
.risk { display: inline-flex; align-items: center; gap: 7px; margin-bottom: 4px; color: #c8352e; font-weight: 600; }
.avatars { display: flex; list-style: none; }
.avatars li { display: flex; align-items: center; justify-content: center; width: 48px; height: 48px; margin-left: -13px; background: #c93831; border: 3px solid #fff; border-radius: 50%; font-size: 17px; font-weight: 700; color: #fff; box-shadow: 0 2px 4px rgba(20, 22, 43, .05); }
.avatars .safe { background: #3a62c9; }
.avatars .more { background: #f4f6fa; color: #5b5f7b; font-weight: 600; }
.switch { display: flex; align-items: center; gap: 6px; margin-left: 35px; }
.switch input { appearance: none; width: 76px; height: 42px; margin-left: 8px; padding: 3px; background: #e5e7f0; border-radius: 21px; display: flex; }
.switch input::before { content: ""; width: 36px; height: 36px; border-radius: 50%; background: #fff; box-shadow: 0 10px 16px rgba(20, 22, 43, .12); }
.switch input:checked { background: #3f6bd8; justify-content: flex-end; }
.btn-view { height: 62px; margin-left: 42px; padding: 0 21px 0 0; gap: 24px; font-size: 24px; font-weight: 500; color: #0c0d16; }

/* Map toolbar */
.toolbar { display: flex; align-items: center; justify-content: space-between; margin: 43px 0 46px; }
.segmented { display: flex; gap: 6px; padding: 7px 8px; background: #fff; border-radius: 16px; }
.segmented button { height: 41px; gap: 10px; padding: 0 17px; border-radius: 12px; font-weight: 500; }
.segmented .on { background: #e9f0fe; color: #3660c0; }

/* Map */
.content { display: grid; grid-template-columns: minmax(0, 1672fr) minmax(0, 621fr); gap: 31px; flex: 1; min-height: 0; }
.map { position: relative; overflow: hidden; background: #7fcde3; border-radius: 20px 20px 0 0; }
.map-art { display: block; }
.map-art path { stroke-width: 2; stroke-linejoin: round; vector-effect: non-scaling-stroke; fill: none; }
.map-art .r { fill: #d7857c; stroke: #8e2c2c; }
.map-art .r2 { fill: #e2867e; stroke: #8e2c2c; }
.map-art .g { fill: #9bdcae; stroke: #2f8c52; }
.map-art .g2 { fill: #9edfb2; stroke: #2f8c52; }
.map-art .g3 { fill: #b7e3bd; stroke: #2f8c52; }
.map-art .y { fill: #dad795; stroke: #b3702b; }
.map-art .y2 { fill: #fbe1a1; stroke: #b3702b; }
.map-art .o { fill: #f0a679; stroke: #bb5a26; }
.map-art .w { fill: #f4f4f0; }
.map-art .nb { stroke: none; }
.map-art .br { stroke: #8e2c2c; }
.map-art .bg { stroke: #2f8c52; }
.map-art .by { stroke: #b3702b; }
.map-art .shade-r { fill: #b87a6c; opacity: .3; }
.map-art .glow-r { fill: #e0646a; opacity: .35; }
.map-art .olive { fill: #c9d18a; opacity: .65; }
.map-art .tundra { fill: #a9c6a8; opacity: .75; }
.map-art .sand { fill: #d3deb0; opacity: .6; }
.map-art .forest { fill: #83d29f; opacity: .4; }
.map-art .lake { fill: #74c9bd; }
.map-art .inner { stroke: #4f4a3c; stroke-width: 1; stroke-dasharray: 4 3; opacity: .5; }
.map-art .line { stroke: #5a5f70; stroke-width: 2; stroke-dasharray: 12 5; }
.tint { opacity: .5; }
.labels { font-family: Roboto, "Noto Sans", sans-serif; font-size: 16px; font-weight: 500; text-anchor: middle; fill: #17181a; stroke: rgba(255, 255, 255, .6); stroke-width: 3px; paint-order: stroke; }
.ocean { font-family: Roboto, "Noto Sans", sans-serif; font-size: 20px; letter-spacing: 3px; text-anchor: middle; fill: #44819f; }
.pin { position: absolute; width: 48px; height: 48px; transform: translate(-50%, -50%); border: 3px solid #fff; border-radius: 50%; background: #3b62c8; color: #fff; font-size: 18px; font-weight: 700; box-shadow: 0 4px 8px rgba(20, 22, 43, .25); }
.lg { width: 54px; height: 54px; font-size: 20px; }
.risk-pin { background: #cb3730; outline: 3px solid rgba(203, 80, 76, .5); outline-offset: 4px; }
.expand { position: absolute; top: 21px; right: 21px; width: 62px; height: 62px; background: #fff; border-radius: 14px; }

/* Alerts */
.alerts { display: flex; flex-direction: column; min-height: 0; background: #fff; border-radius: 22px 22px 0 0; }
.alerts-head { display: flex; flex-direction: column; gap: 14px; padding: 27px 28px 27px; border-bottom: 2px solid #f3f5f7; }
.alerts-row { display: flex; align-items: center; }
.alerts-row h2 { margin-left: 12px; font-size: 24px; font-weight: 600; line-height: 34px; color: #14162b; }
.count { margin-left: 18px; padding: 2px 10px; border-radius: 12px; background: #fafbfd; font-size: 19px; font-weight: 500; line-height: 28px; }
.small { width: 222px; margin-left: auto; color: #0c0d16; }
.small select { height: 56px; font-size: 21px; }
.small .icon { color: #7c7d82; }
.search { display: flex; align-items: center; gap: 12px; height: 55px; padding: 0 12px; border: 2px solid #e6e8ea; border-radius: 16px; color: #a9adc0; }
.search input { flex: 1; min-width: 0; padding: 0; border: 0; outline: 0; background: none; font-size: 24px; }
.search input::placeholder { color: #74788a; opacity: 1; }
.alert-list { display: flex; flex-direction: column; gap: 14px; flex: 1; min-height: 0; padding: 14px 21px; overflow: hidden; }
.alert { display: flex; gap: 21px; flex: none; padding: 20px 21px 19px 20px; border: 2px solid #e6e8ea; border-radius: 16px; }
.alert-body { flex: 1; min-width: 0; }
.alert-top { display: flex; align-items: flex-start; gap: 16px; height: 48px; }
.alert-top h3 { flex: 1; min-width: 0; overflow: hidden; text-overflow: ellipsis; white-space: nowrap; font-size: 24px; font-weight: 500; line-height: 34px; color: #14162b; }
.tag { padding: 0 19px; border-radius: 12px; background: #f5cccb; color: #a32a26; line-height: 44px; }
.meta { display: flex; align-items: flex-end; line-height: 30px; white-space: pre; }
.meta span { display: inline-flex; align-items: center; gap: 7px; margin-bottom: 4px; }
.desc { display: -webkit-box; overflow: hidden; -webkit-box-orient: vertical; -webkit-line-clamp: 2; margin: 4px -8px 0 0; line-height: 28px; color: #b0b5c9; }
.time { margin-top: 5px; font-size: 19px; line-height: 32px; color: #b0b5c9; }
.fab { position: fixed; right: 42px; bottom: 146px; width: 76px; height: 76px; border-radius: 50%; background: #3f6bd8; color: #fff; box-shadow: 0 8px 24px rgba(20, 22, 43, .15); }
```
